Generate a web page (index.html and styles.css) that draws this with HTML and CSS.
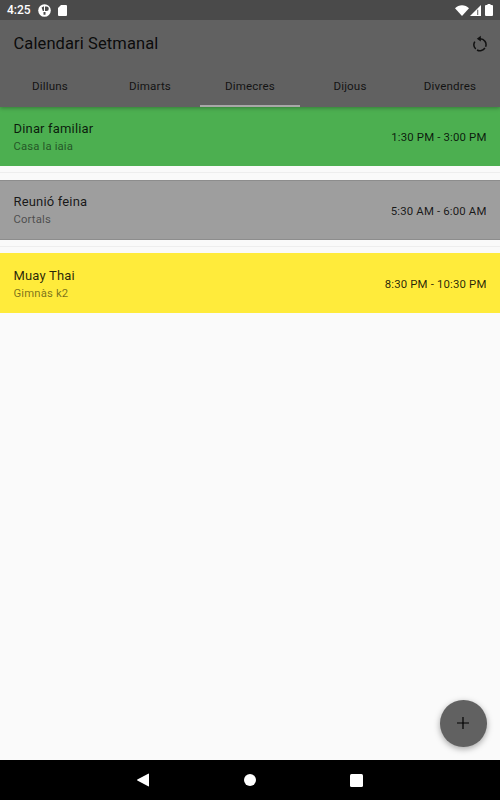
FILE: index.html
```html
<!DOCTYPE html>
<html lang="ca">
<head>
<meta charset="utf-8">
<title>Calendari Setmanal</title>
<link rel="stylesheet" href="styles.css">
</head>
<body>
<div class="screen">
  <header class="top">
    <div class="status">
      <span class="clock">4:25</span>
      <svg class="ic-notif" width="13" height="13" viewBox="0 0 13 13"><circle cx="6.500" cy="6.500" r="6.300" fill="#fff"/><path d="M6 2.200V7H4.800L3.600 3.400zM7 2.500h1.500a2.300 2.300 0 0 1 0 4.600H7zM5.500 8H7.500v2.800H5.500z" fill="#4a4a4a"/></svg>
      <svg class="ic-sd" width="9" height="11" viewBox="0 0 9 11"><path d="M3 0h5a1 1 0 0 1 1 1v9a1 1 0 0 1-1 1H1a1 1 0 0 1-1-1V3z" fill="#fff"/></svg>
      <span class="spacer"></span>
      <svg class="ic-wifi" width="14" height="11" viewBox="0 0 14 11"><path d="M0 3.200C3.800-.9 10.200-.9 14 3.200L7 11z" fill="#fff"/></svg>
      <svg class="ic-signal" width="11" height="11" viewBox="0 0 11 11"><path d="M0 11 11 0v11z" fill="#fff"/><path d="M7 4.800h1.300V10H7z" fill="#4a4a4a" opacity=".7"/></svg>
      <svg class="ic-batt" width="8" height="12" viewBox="0 0 8 12"><path d="M2.500 0h3v1H7a1 1 0 0 1 1 1v9a1 1 0 0 1-1 1H1a1 1 0 0 1-1-1V2a1 1 0 0 1 1-1h1.500z" fill="#fff"/></svg>
    </div>
    <div class="bar">
      <h1 class="title">Calendari Setmanal</h1>
      <svg class="ic-refresh" width="16" height="18" viewBox="0 0 16 18" fill="none"><path d="M8 3.700A6 6 0 0 1 13.640 11.800M12.900 13A6 6 0 0 1 5 15M3.760 14A6 6 0 0 1 2.800 6.700" stroke="#111" stroke-width="1.500"/><path d="M8.800 0.800v5.800L4.800 3.700z" fill="#111"/></svg>
    </div>
    <nav class="tabs">
      <div class="tab">Dilluns</div>
      <div class="tab">Dimarts</div>
      <div class="tab active">Dimecres</div>
      <div class="tab">Dijous</div>
      <div class="tab">Divendres</div>
    </nav>
  </header>
  <main class="list">
    <article class="event green">
      <div class="info"><div class="name">Dinar familiar</div><div class="place">Casa la iaia</div></div>
      <div class="time">1:30 PM - 3:00 PM</div>
    </article>
    <div class="sep"></div>
    <article class="event grey">
      <div class="info"><div class="name">Reunió feina</div><div class="place">Cortals</div></div>
      <div class="time">5:30 AM - 6:00 AM</div>
    </article>
    <div class="sep"></div>
    <article class="event yellow">
      <div class="info"><div class="name">Muay Thai</div><div class="place">Gimnàs k2</div></div>
      <div class="time">8:30 PM - 10:30 PM</div>
    </article>
  </main>
  <button class="fab" aria-label="Afegir">
    <svg width="14" height="14" viewBox="0 0 14 14"><path d="M7 1v12M1 7h12" stroke="#000" stroke-width="1.200"/></svg>
  </button>
  <footer class="nav">
    <svg width="14" height="14" viewBox="0 0 14 14"><path d="M13 1v12a.5.5 0 0 1-.8.300L1.300 7.400a.5.5 0 0 1 0-.800L12.200.700A.5.5 0 0 1 13 1z" fill="#fff"/></svg>
    <svg width="12" height="12" viewBox="0 0 12 12"><circle cx="6" cy="6" r="6" fill="#fff"/></svg>
    <svg width="13" height="13" viewBox="0 0 13 13"><rect width="13" height="13" rx="1.500" fill="#fff"/></svg>
  </footer>
</div>
</body>
</html>
```

FILE: styles.css
```css
* { box-sizing: border-box; }
html, body { margin: 0; padding: 0; }
body { background: #fafafa; font-family: Roboto, sans-serif; }
.screen { position: relative; width: 500px; height: 800px; display: flex; flex-direction: column; overflow: hidden; }
.top { background: #616161; height: 106.670px; flex: none; position: relative; z-index: 2; box-shadow: 0 1px 4px rgba(0,0,0,.3); }
.status { height: 20px; background: #4a4a4a; display: flex; align-items: center; padding: 0 7px; }
.clock { color: #fff; font-size: 12px; font-weight: 500; line-height: 20px; width: 26px; }
.ic-notif { margin-left: 5px; margin-top: 1px; }
.ic-sd { margin-left: 7px; }
.spacer { flex: 1; }
.ic-wifi { margin-right: 1px; }
.ic-signal { margin-right: 4px; }
.bar { height: 47px; display: flex; align-items: center; justify-content: space-between; padding: 0 12px 0 13.500px; }
.title { margin: 0; font-size: 16.500px; font-weight: 400; color: rgba(0,0,0,.9); letter-spacing: .1px; }
.tabs { display: grid; grid-template-columns: repeat(5, 1fr); height: 39.670px; }
.tab { font-size: 11.600px; font-weight: 400; color: rgba(0,0,0,.82); text-align: center; line-height: 38px; letter-spacing: .15px; }
.tab.active { border-bottom: 2px solid #a8a8a8; }
.list { flex: 1; background: #fafafa; display: flex; flex-direction: column; }
.event { height: 59.670px; flex: none; display: flex; align-items: center; justify-content: space-between; padding: 0 13.500px; color: rgba(0,0,0,.85); }
.green { background: #4caf50; }
.grey { background: #9e9e9e; box-shadow: inset 0 1px 0 #8d8d8d, inset 0 -1px 0 #8d8d8d; }
.yellow { background: #ffeb3b; }
.info { padding-top: 2px; }
.name { font-size: 13px; line-height: 18px; letter-spacing: .17px; font-weight: 400; }
.place { font-size: 11.300px; line-height: 16px; margin-top: 1px; opacity: .62; letter-spacing: .15px; }
.time { font-size: 11.400px; letter-spacing: .15px; font-weight: 400; padding-top: 1.500px; }
.sep { height: 13.670px; flex: none; background: linear-gradient(#fafafa 6px, #eeeeee 6px, #eeeeee 7px, #fafafa 7px); }
.fab { position: absolute; right: 13.330px; bottom: 53.330px; width: 46.670px; height: 46.670px; border: 0; padding: 0; border-radius: 50%; background: #616161; box-shadow: 0 2px 6px rgba(0,0,0,.35); display: flex; align-items: center; justify-content: center; }
.nav { height: 40px; flex: none; background: #000; display: flex; align-items: center; padding-left: 136px; gap: 94px; }
```
